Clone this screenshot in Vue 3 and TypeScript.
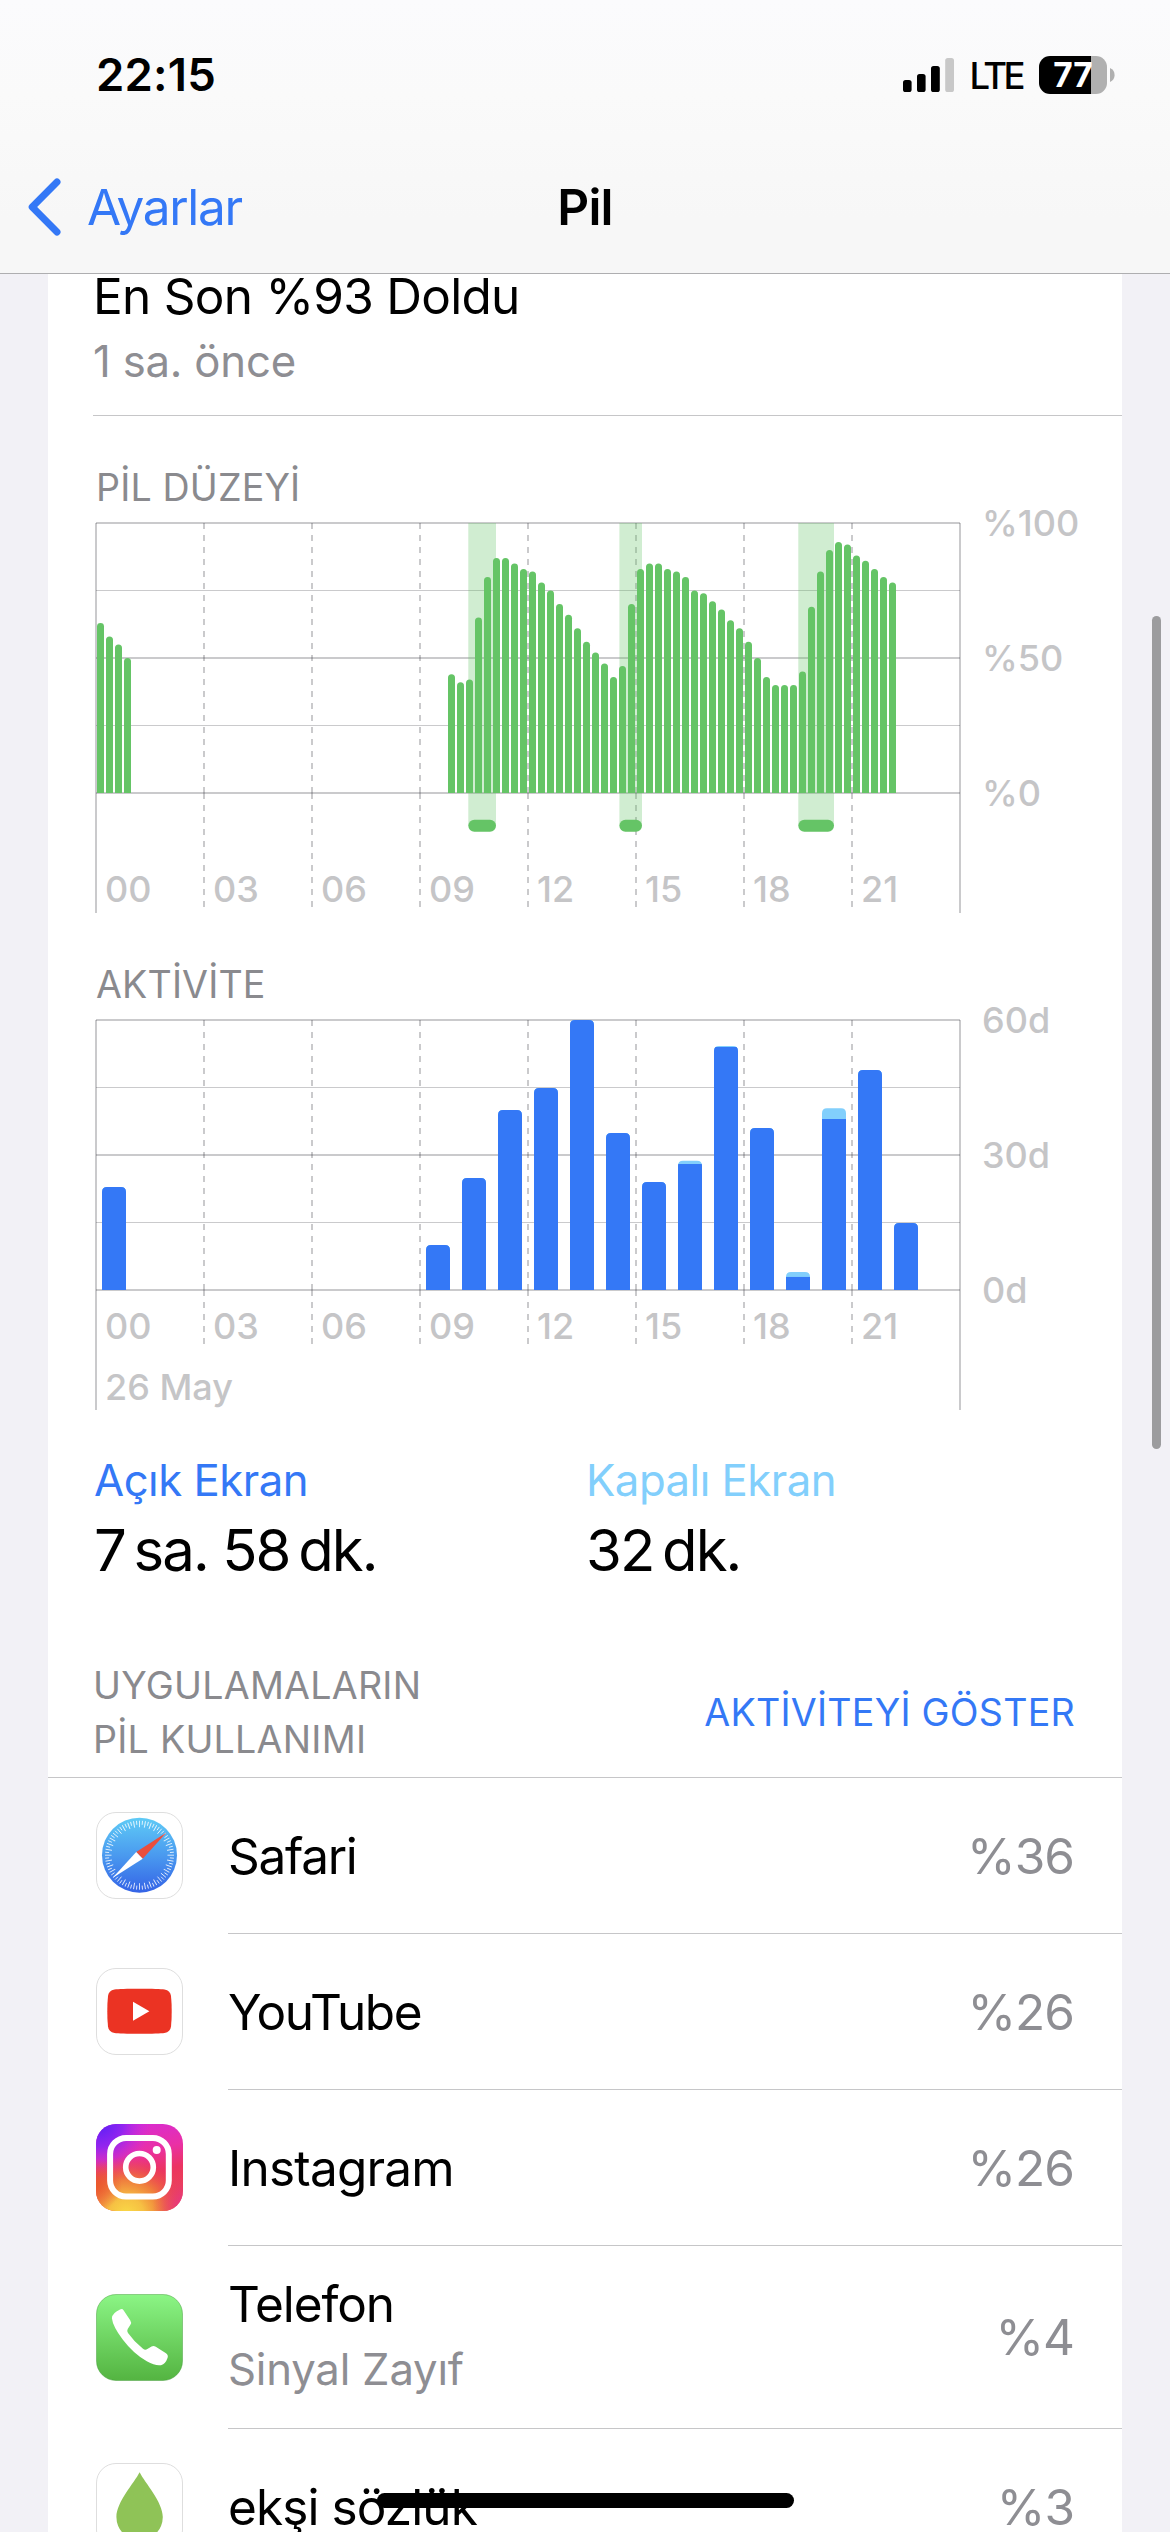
<script setup lang="ts">
interface YLabel { text: string; at: number }
interface ActivityBar { hour: number; on: number; off: number }
interface AppRow { id: string; name: string; note?: string; share: string; tracking: number }

const PLOT_X = 48
const PLOT_Y = 13
const PLOT_W = 864
const PLOT_H = 270
const BASE = PLOT_Y + PLOT_H

const hours = ['00', '03', '06', '09', '12', '15', '18', '21']
const hourX = (i: number): number => PLOT_X + i * 108
const gridLines = [0, 1, 2, 3, 4].map((i) => ({ y: PLOT_Y + i * 67.5, w: i % 2 ? 1 : 2 }))

const levelLabels: YLabel[] = [
  { text: '%100', at: 0 },
  { text: '%50', at: 135 },
  { text: '%0', at: 270 },
]
const activityLabels: YLabel[] = [
  { text: '60d', at: 0 },
  { text: '30d', at: 135 },
  { text: '0d', at: 270 },
]

// Battery percentage per quarter of an hour
const night = [63, 58, 55, 50]
const day = [
  44, 41, 42, 65, 80, 87, 87, 85, 83, 82, 78, 75, 70, 66, 61, 56, 52, 48, 43, 47, 70, 83, 85, 85, 83,
  82, 80, 75, 74, 71, 68, 64, 61, 56, 50, 43, 40, 40, 40, 45, 69, 82, 90, 93, 92, 88, 86, 83, 80, 78,
]
const levels = [
  ...night.map((v, i) => ({ slot: i, v })),
  ...day.map((v, i) => ({ slot: 39 + i, v })),
]
function levelPath(slot: number, v: number): string {
  const x = PLOT_X + 1 + slot * 9
  const top = BASE - v * 2.7
  return `M${x} ${BASE}V${top + 3.5}a3.5 3.5 0 0 1 7 0V${BASE}Z`
}

const charging = [
  { x: 420.3, w: 27.7 },
  { x: 571.4, w: 22.6 },
  { x: 750.3, w: 35.7 },
]

// Minutes of use per hour, screen on and screen off
const activity: ActivityBar[] = [
  { hour: 0, on: 22.9, off: 0 },
  { hour: 9, on: 10, off: 0 },
  { hour: 10, on: 24.9, off: 0 },
  { hour: 11, on: 40, off: 0 },
  { hour: 12, on: 44.9, off: 0 },
  { hour: 13, on: 60, off: 0 },
  { hour: 14, on: 34.9, off: 0 },
  { hour: 15, on: 24, off: 0 },
  { hour: 16, on: 28, off: 0.7 },
  { hour: 17, on: 54, off: 0.2 },
  { hour: 18, on: 36, off: 0 },
  { hour: 19, on: 2.9, off: 1.1 },
  { hour: 20, on: 38, off: 2.4 },
  { hour: 21, on: 48.9, off: 0 },
  { hour: 22, on: 14.9, off: 0 },
]
function activityPath(b: ActivityBar): string {
  const x = PLOT_X + 6 + b.hour * 36
  const top = BASE - (b.on + b.off) * 4.5
  return `M${x} ${BASE}V${top + 5}q0 -5 5 -5h14q5 0 5 5V${BASE}Z`
}

const apps: AppRow[] = [
  { id: 'safari', name: 'Safari', share: '%36', tracking: -1.3 },
  { id: 'youtube', name: 'YouTube', share: '%26', tracking: -1.4 },
  { id: 'instagram', name: 'Instagram', share: '%26', tracking: -0.8 },
  { id: 'phone', name: 'Telefon', note: 'Sinyal Zayıf', share: '%4', tracking: -1.1 },
  { id: 'eksi', name: 'ekşi sözlük', share: '%3', tracking: -0.9 },
]

const ticks = Array.from({ length: 72 }, (_, i) => ({ a: i * 5, len: i % 2 ? 4 : 6.5 }))
</script>

<template>
  <div class="screen">
    <header class="top">
      <div class="status">
        <span class="time">22:15</span>
        <div class="status-right">
          <svg class="signal" width="51" height="34" viewBox="0 0 51 34">
            <rect x="0" y="22" width="8.6" height="12" rx="2.6" />
            <rect x="14" y="16" width="8.6" height="18" rx="2.6" />
            <rect x="28" y="8" width="8.8" height="26" rx="2.6" />
            <rect x="42.2" y="0" width="8.8" height="34" rx="2.6" fill="#c8c8c8" />
          </svg>
          <span class="lte">LTE</span>
          <div class="battery"><span>77</span></div>
          <svg class="nub" width="5" height="14" viewBox="0 0 5 14"><path d="M0 0Q4.6 2 4.6 7T0 14Z" fill="#b0b0b0" /></svg>
        </div>
      </div>
      <nav class="nav">
        <div class="back">
          <svg width="34" height="58" viewBox="0 0 34 58" fill="none" stroke="#3478f6" stroke-width="7" stroke-linecap="round" stroke-linejoin="round">
            <path d="M29 4L4.200 29L29 54" />
          </svg>
          <span>Ayarlar</span>
        </div>
        <h1>Pil</h1>
        <div></div>
      </nav>
    </header>

    <main class="card">
      <section class="last-charge">
        <div class="title">En Son %93 Doldu</div>
        <div class="sub">1 sa. önce</div>
      </section>

      <h2 class="caption">PİL DÜZEYİ</h2>
      <svg class="chart" width="1074" height="403" viewBox="0 0 1074 403">
        <g stroke="#3c3c43" stroke-opacity="0.27">
          <line v-for="g in gridLines" :key="g.y" :x1="PLOT_X" :x2="PLOT_X + PLOT_W" :y1="g.y" :y2="g.y" :stroke-width="g.w" />
          <line :x1="PLOT_X" :x2="PLOT_X" :y1="PLOT_Y" y2="403" stroke-width="2" />
          <line :x1="PLOT_X + PLOT_W" :x2="PLOT_X + PLOT_W" :y1="PLOT_Y" y2="403" stroke-width="2" />
          <template v-for="i in 7" :key="i">
            <line :x1="hourX(i)" :x2="hourX(i)" :y1="PLOT_Y" :y2="BASE" stroke-width="2" stroke-dasharray="6 6" />
            <line :x1="hourX(i)" :x2="hourX(i)" :y1="BASE" :y2="BASE + 114" stroke-width="2" stroke-dasharray="6 6" />
          </template>
        </g>
        <g fill="#65c466">
          <rect v-for="c in charging" :key="c.x" :x="c.x" :y="PLOT_Y" :width="c.w" height="303" fill-opacity="0.3" />
          <rect v-for="c in charging" :key="'p' + c.x" :x="c.x" y="309.700" :width="c.w" height="12" rx="6" />
          <path v-for="l in levels" :key="l.slot" :d="levelPath(l.slot, l.v)" />
        </g>
        <g class="axis">
          <text v-for="(h, i) in hours" :key="h" :x="hourX(i) + 9" y="392">{{ h }}</text>
          <text v-for="l in levelLabels" :key="l.text" x="934" :y="l.at + 25.700">{{ l.text }}</text>
        </g>
      </svg>

      <h2 class="caption">AKTİVİTE</h2>
      <svg class="chart" width="1074" height="403" viewBox="0 0 1074 403">
        <g stroke="#3c3c43" stroke-opacity="0.27">
          <line v-for="g in gridLines" :key="g.y" :x1="PLOT_X" :x2="PLOT_X + PLOT_W" :y1="g.y" :y2="g.y" :stroke-width="g.w" />
          <line :x1="PLOT_X" :x2="PLOT_X" :y1="PLOT_Y" y2="403" stroke-width="2" />
          <line :x1="PLOT_X + PLOT_W" :x2="PLOT_X + PLOT_W" :y1="PLOT_Y" y2="403" stroke-width="2" />
          <template v-for="i in 7" :key="i">
            <line :x1="hourX(i)" :x2="hourX(i)" :y1="PLOT_Y" :y2="BASE" stroke-width="2" stroke-dasharray="6 6" />
            <line :x1="hourX(i)" :x2="hourX(i)" :y1="BASE" :y2="BASE + 54" stroke-width="2" stroke-dasharray="6 6" />
          </template>
        </g>
        <clipPath id="activity-bars">
          <path v-for="b in activity" :key="b.hour" :d="activityPath(b)" />
        </clipPath>
        <g clip-path="url(#activity-bars)">
          <rect :x="PLOT_X" :y="PLOT_Y" :width="PLOT_W" :height="PLOT_H" fill="#82cffc" />
          <rect v-for="b in activity" :key="b.hour" :x="PLOT_X + 6 + b.hour * 36" :y="BASE - b.on * 4.5" width="24" :height="b.on * 4.5" fill="#3478f6" />
        </g>
        <g class="axis">
          <text v-for="(h, i) in hours" :key="h" :x="hourX(i) + 9" y="332">{{ h }}</text>
          <text class="date" x="57" y="393">26 May</text>
          <text v-for="l in activityLabels" :key="l.text" x="934" :y="l.at + 25.700">{{ l.text }}</text>
        </g>
      </svg>

      <section class="totals">
        <div>
          <div class="total-name on">Açık Ekran</div>
          <div class="total-value">7&#8201;sa. 58&#8201;dk.</div>
        </div>
        <div>
          <div class="total-name off">Kapalı Ekran</div>
          <div class="total-value">32&#8201;dk.</div>
        </div>
      </section>

      <section class="usage-head">
        <h2>UYGULAMALARIN<br />PİL KULLANIMI</h2>
        <span class="toggle">AKTİVİTEYİ GÖSTER</span>
      </section>

      <ul class="apps">
        <li v-for="app in apps" :key="app.id" :class="['app', { tall: app.note }]">
          <svg v-if="app.id === 'safari'" class="icon" viewBox="0 0 87 87">
            <defs>
              <linearGradient id="safari-sky" x1="0" y1="0" x2="0" y2="1">
                <stop offset="0" stop-color="#5fcbf6" />
                <stop offset="0.5" stop-color="#4a9aef" />
                <stop offset="1" stop-color="#3463e6" />
              </linearGradient>
            </defs>
            <rect x="0.5" y="0.5" width="86" height="86" rx="19.500" fill="#fff" stroke="#dedede" />
            <circle cx="43.500" cy="43.200" r="37.500" fill="url(#safari-sky)" />
            <line v-for="t in ticks" :key="t.a" x1="43.500" x2="43.500" y1="8.700" :y2="8.7 + t.len" stroke="#fff" stroke-width="0.900" stroke-opacity="0.850" :transform="`rotate(${t.a} 43.5 43.2)`" />
            <path d="M70.500 20.500L46.700 46.700L40.200 40Z" fill="#ea4e3d" />
            <path d="M16.500 66L40.200 40L46.700 46.700Z" fill="#fff" />
          </svg>

          <svg v-else-if="app.id === 'youtube'" class="icon" viewBox="0 0 87 87">
            <rect x="0.5" y="0.5" width="86" height="86" rx="19.500" fill="#fff" stroke="#dedede" />
            <path d="M43.500 20.700C56 20.700 65 21 68.500 21.500C72.500 22.200 74.500 24.500 75 28C75.600 33 75.700 38 75.700 43.200S75.600 53.500 75 58.500C74.500 62 72.500 64.300 68.500 64.900C65 65.400 56 65.700 43.500 65.700S22 65.400 18.500 64.900C14.500 64.300 12.500 62 12 58.500C11.400 53.500 11.300 48.400 11.300 43.200S11.400 33 12 28C12.500 24.500 14.500 22.200 18.500 21.500C22 21 31 20.700 43.500 20.700Z" fill="#eb3323" />
            <path d="M37 33.800L53.400 43.200L37 52.700Z" fill="#fff" />
          </svg>

          <svg v-else-if="app.id === 'instagram'" class="icon" viewBox="0 0 87 87">
            <defs>
              <linearGradient id="ig-base" x1="0.250" y1="0" x2="0.450" y2="1">
                <stop offset="0" stop-color="#d62bd6" />
                <stop offset="0.350" stop-color="#ea30a6" />
                <stop offset="0.600" stop-color="#eb3462" />
                <stop offset="1" stop-color="#ec5044" />
              </linearGradient>
              <radialGradient id="ig-violet" cx="0.050" cy="0" r="0.580">
                <stop offset="0" stop-color="#5a1ff5" />
                <stop offset="0.450" stop-color="#8a24f4" stop-opacity="0.900" />
                <stop offset="1" stop-color="#c92be8" stop-opacity="0" />
              </radialGradient>
              <radialGradient id="ig-sun" cx="0.350" cy="1.050" r="0.680">
                <stop offset="0" stop-color="#fadb47" />
                <stop offset="0.300" stop-color="#f6c043" />
                <stop offset="0.600" stop-color="#f08a38" stop-opacity="0.850" />
                <stop offset="1" stop-color="#ec4a45" stop-opacity="0" />
              </radialGradient>
              <radialGradient id="ig-rose" cx="1.050" cy="0.950" r="0.400">
                <stop offset="0" stop-color="#e5309a" />
                <stop offset="1" stop-color="#e83270" stop-opacity="0" />
              </radialGradient>
              <radialGradient id="ig-ember" cx="0" cy="0.700" r="0.300">
                <stop offset="0" stop-color="#ea5a26" stop-opacity="0.900" />
                <stop offset="1" stop-color="#ea4a3a" stop-opacity="0" />
              </radialGradient>
            </defs>
            <rect width="87" height="87" rx="20" fill="url(#ig-base)" />
            <rect width="87" height="87" rx="20" fill="url(#ig-violet)" />
            <rect width="87" height="87" rx="20" fill="url(#ig-sun)" />
            <rect width="87" height="87" rx="20" fill="url(#ig-ember)" />
            <rect width="87" height="87" rx="20" fill="url(#ig-rose)" />
            <g fill="none" stroke="#fff">
              <rect x="14.100" y="14" width="58.700" height="58.600" rx="16" stroke-width="6" />
              <circle cx="43.500" cy="43.300" r="13.800" stroke-width="5.600" />
            </g>
            <circle cx="60.700" cy="26" r="4" fill="#fff" />
          </svg>

          <svg v-else-if="app.id === 'phone'" class="icon" viewBox="0 0 87 87">
            <defs>
              <linearGradient id="phone-green" x1="0" y1="0" x2="0" y2="1">
                <stop offset="0" stop-color="#8bf585" />
                <stop offset="1" stop-color="#54b441" />
              </linearGradient>
            </defs>
            <rect x="0.500" y="0.500" width="86" height="86" rx="19.500" fill="url(#phone-green)" stroke="#3f9a35" stroke-opacity="0.450" />
            <path d="M24 15.600Q26.200 14.200 27.700 16.400L34.200 26.200Q35.800 28.500 34.400 30.700L31.700 35Q30.600 37 32 39Q38.300 48 47 54.800Q49.200 56.400 51.400 55L55.500 52.600Q57.500 51.300 59.800 52.800L70 59.300Q72.500 61 71.600 63.800Q69.600 70 65 71.200Q59.500 72.200 50.800 67.300Q37.500 59.800 26.700 45.500Q16.800 32.500 15.900 24.300Q16 19.200 24 15.600Z" fill="#fff" />
          </svg>

          <svg v-else class="icon" viewBox="0 0 87 87">
            <rect x="0.500" y="0.500" width="86" height="86" rx="19.500" fill="#fff" stroke="#dedede" />
            <path d="M43.600 9.300C49 20 66.800 39 66.800 54A23.200 23.200 0 0 1 20.400 54C20.400 39 38.200 20 43.600 9.300Z" fill="#8fc357" />
          </svg>

          <div class="app-body">
            <div class="app-text">
              <div class="title" :style="{ letterSpacing: app.tracking + 'px' }">{{ app.name }}</div>
              <div v-if="app.note" class="sub">{{ app.note }}</div>
            </div>
            <div class="share">{{ app.share }}</div>
          </div>
        </li>
      </ul>
    </main>

    <div class="scrollbar"></div>
    <div class="home"></div>
  </div>
</template>

<style>
body {
  background: #f2f1f6;
}
</style>

<style scoped>
.screen {
  position: relative;
  width: 1170px;
  height: 2532px;
  overflow: hidden;
  background: #f2f1f6;
  color: #000;
  font-family: Inter, "Liberation Sans", sans-serif;
  font-weight: 400;
  white-space: nowrap;
}
h1,
h2,
ul {
  margin: 0;
  padding: 0;
  font-weight: inherit;
  list-style: none;
}
svg {
  display: block;
  flex: none;
}

.top {
  height: 273px;
  border-bottom: 1px solid #aeaeb0;
  background: linear-gradient(#fbfbfd, #fafafa 35%, #f7f7f7 80%, #f7f7f7);
}
.status {
  display: flex;
  align-items: center;
  justify-content: space-between;
  box-sizing: border-box;
  height: 141px;
  padding: 8px 55px 0 96px;
}
.time {
  font-size: 45.500px;
  font-weight: 600;
  letter-spacing: 0.200px;
}
.status-right {
  display: flex;
  align-items: center;
}
.lte {
  margin: 2px 17px 0 15px;
  font-size: 36.500px;
  font-weight: 500;
  letter-spacing: -3.500px;
}
.battery {
  display: flex;
  align-items: center;
  justify-content: center;
  width: 68px;
  height: 38px;
  border-radius: 11px;
  background: linear-gradient(90deg, #000 52px, #b0b0b0 52px);
  color: #fff;
  font-size: 33.500px;
  font-weight: 700;
}
.nub {
  margin-left: 3px;
}
.nav {
  display: grid;
  grid-template-columns: 1fr auto 1fr;
  align-items: center;
  height: 132px;
}
.back {
  display: flex;
  align-items: center;
  gap: 25px;
  padding-left: 28px;
  color: #3478f6;
  font-size: 49.500px;
  letter-spacing: -1.300px;
}
h1 {
  font-size: 49.500px;
  font-weight: 600;
  letter-spacing: -0.800px;
}

.card {
  width: 1074px;
  margin: 0 48px;
  background: #fff;
}
.title {
  font-size: 49.500px;
  line-height: 60px;
  letter-spacing: -0.730px;
}
.sub {
  color: #8e8e93;
  font-size: 43.700px;
  line-height: 60px;
  letter-spacing: -0.200px;
}
.last-charge {
  box-sizing: border-box;
  height: 142px;
  margin-left: 45px;
  border-bottom: 1px solid #c6c6c8;
}
.last-charge .title {
  line-height: 44px;
}
.last-charge .sub {
  margin-top: 14px;
}
.caption {
  height: 45px;
  padding: 49px 0 0 48px;
  color: #8a8a8e;
  font-size: 37.600px;
  line-height: 46px;
  letter-spacing: 0.150px;
}
.chart {
  overflow: visible;
}
.axis {
  fill: #c5c5c7;
  font-size: 36px;
  font-weight: 500;
}

.totals {
  display: grid;
  grid-template-columns: 492px 1fr;
  padding: 44px 0 0 46px;
}
.total-name {
  font-size: 43.700px;
  line-height: 54px;
  letter-spacing: -0.500px;
}
.on {
  color: #3478f6;
}
.off {
  color: #82cffc;
}
.total-value {
  margin-top: 7px;
  font-size: 58px;
  line-height: 70px;
  letter-spacing: -1.900px;
}

.usage-head {
  display: flex;
  align-items: center;
  justify-content: space-between;
  padding: 74px 47px 10px 45px;
  border-bottom: 1px solid #c6c6c8;
  font-size: 37.600px;
  line-height: 54px;
  letter-spacing: 0.250px;
}
.usage-head h2 {
  color: #8a8a8e;
  font-size: inherit;
}
.toggle {
  color: #3478f6;
}

.app {
  display: flex;
  align-items: center;
  height: 156px;
  padding-left: 48px;
}
.app.tall {
  height: 183px;
}
.icon {
  width: 87px;
  height: 87px;
  margin-bottom: 1px;
}
.tall .icon {
  margin-bottom: 0;
}
.app-body {
  display: flex;
  flex: 1;
  align-items: center;
  justify-content: space-between;
  box-sizing: border-box;
  height: 100%;
  margin-left: 45px;
  padding-right: 48px;
  border-bottom: 1px solid #c6c6c8;
}
.app-text .sub {
  margin-top: 6px;
}
.share {
  color: #8e8e93;
  font-size: 49.500px;
  line-height: 60px;
  letter-spacing: -1px;
}

.scrollbar {
  position: absolute;
  top: 616px;
  left: 1152px;
  width: 9px;
  height: 833px;
  border-radius: 5px;
  background: #9c9c9e;
}
.home {
  position: absolute;
  top: 2493px;
  left: 377px;
  width: 417px;
  height: 15px;
  border-radius: 8px;
  background: #000;
}
</style>
